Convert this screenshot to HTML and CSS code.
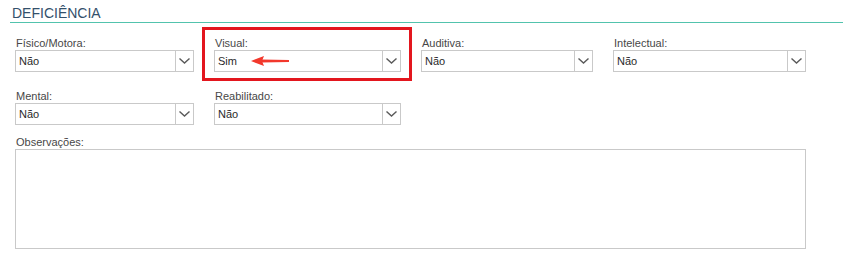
FILE: index.html
```html
<!DOCTYPE html>
<html lang="pt-BR">
<head>
  <meta charset="UTF-8">
  <meta name="viewport" content="width=device-width, initial-scale=1.0">
  <title>Deficiência</title>
  <link rel="stylesheet" href="styles.css">
</head>
<body>
  <div class="section">
    <h2 class="section-title">DEFICIÊNCIA</h2>

    <div class="form-grid">
      <div class="field">
        <label>Físico/Motora:</label>
        <div class="select">
          <span class="value">Não</span>
          <span class="caret"><svg width="11" height="6" viewBox="0 0 11 6"><path d="M0.5 0.5 L5.5 5 L10.5 0.5" fill="none" stroke="#5a5a5a" stroke-width="1.4"/></svg></span>
        </div>
      </div>

      <div class="field field-marked">
        <label>Visual:</label>
        <div class="select">
          <span class="value">Sim</span>
          <span class="caret"><svg width="11" height="6" viewBox="0 0 11 6"><path d="M0.5 0.5 L5.5 5 L10.5 0.5" fill="none" stroke="#5a5a5a" stroke-width="1.4"/></svg></span>
        </div>
        <!-- marcação da captura -->
        <div class="mark-box"></div>
        <svg class="mark-arrow" width="40" height="12" viewBox="0 0 40 12">
          <path d="M10 4.4 L38 5.1 L38 6.9 L10 7.6 Z" fill="#f2382c"/>
          <path d="M0 6 L13 1 L11 6 L13 11 Z" fill="#f2382c"/>
        </svg>
      </div>

      <div class="field">
        <label>Auditiva:</label>
        <div class="select">
          <span class="value">Não</span>
          <span class="caret"><svg width="11" height="6" viewBox="0 0 11 6"><path d="M0.5 0.5 L5.5 5 L10.5 0.5" fill="none" stroke="#5a5a5a" stroke-width="1.4"/></svg></span>
        </div>
      </div>

      <div class="field">
        <label>Intelectual:</label>
        <div class="select">
          <span class="value">Não</span>
          <span class="caret"><svg width="11" height="6" viewBox="0 0 11 6"><path d="M0.5 0.5 L5.5 5 L10.5 0.5" fill="none" stroke="#5a5a5a" stroke-width="1.4"/></svg></span>
        </div>
      </div>

      <div class="field">
        <label>Mental:</label>
        <div class="select">
          <span class="value">Não</span>
          <span class="caret"><svg width="11" height="6" viewBox="0 0 11 6"><path d="M0.5 0.5 L5.5 5 L10.5 0.5" fill="none" stroke="#5a5a5a" stroke-width="1.4"/></svg></span>
        </div>
      </div>

      <div class="field">
        <label>Reabilitado:</label>
        <div class="select">
          <span class="value">Não</span>
          <span class="caret"><svg width="11" height="6" viewBox="0 0 11 6"><path d="M0.5 0.5 L5.5 5 L10.5 0.5" fill="none" stroke="#5a5a5a" stroke-width="1.4"/></svg></span>
        </div>
      </div>
    </div>

    <div class="field field-notes">
      <label>Observações:</label>
      <div class="textarea"></div>
    </div>
  </div>
</body>
</html>
```

FILE: styles.css
```css
body {
  margin: 0;
  background: #ffffff;
  font-family: 'Liberation Sans', Arial, sans-serif;
  font-size: 11px;
  color: #333333;
}
.section {
  width: 843px;
}
.section-title {
  margin: 0 0 0 10px;
  padding: 5px 2px 0;
  font-size: 14px;
  font-weight: normal;
  line-height: 17px;
  color: #33506b;
  border-bottom: 1px solid #52c3ad;
}
.form-grid {
  display: grid;
  grid-template-columns: 179px 187px 172px 193px;
  column-gap: 20px;
  row-gap: 17px;
  margin-top: 13px;
  padding-left: 15px;
}
.field {
  position: relative;
}
label {
  display: block;
  padding-left: 1px;
  line-height: 14px;
  color: #474747;
}
.select {
  display: flex;
  height: 22px;
  box-sizing: border-box;
  border: 1px solid #c9c9c9;
  background: #ffffff;
}
.value {
  flex: 1;
  padding-left: 3px;
  line-height: 20px;
  color: #2a2a2a;
}
.caret {
  width: 17px;
  border-left: 1px solid #c9c9c9;
  display: flex;
  align-items: center;
  justify-content: center;
}
.mark-box {
  position: absolute;
  left: -12px;
  top: -9px;
  width: 210px;
  height: 54px;
  box-sizing: border-box;
  border: 3px solid #e3161e;
}
.mark-arrow {
  position: absolute;
  left: 37px;
  top: 19px;
}
.field-notes {
  margin-top: 10px;
  padding-left: 15px;
  width: 791px;
}
.textarea {
  height: 100px;
  box-sizing: border-box;
  border: 1px solid #c9c9c9;
}
```
